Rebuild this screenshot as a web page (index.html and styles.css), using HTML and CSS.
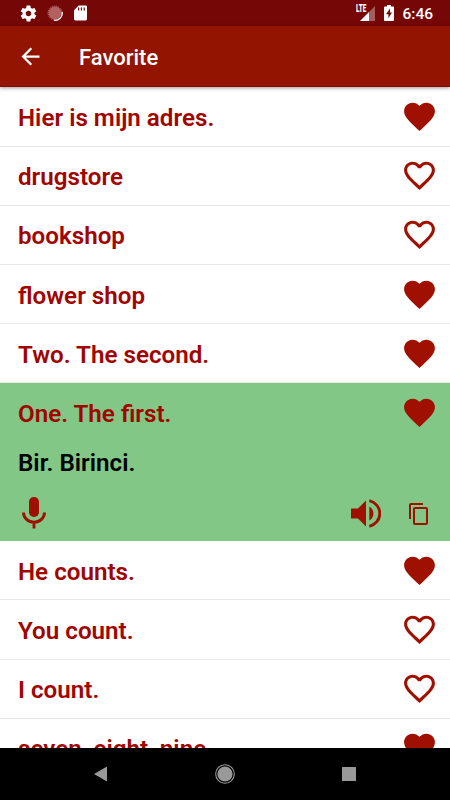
FILE: index.html
```
<!DOCTYPE html>
<html lang="en">
<head>
<meta charset="utf-8">
<title>Favorite</title>
<link rel="stylesheet" href="styles.css">
</head>
<body>
<svg class="defs" aria-hidden="true">
  <symbol id="full" viewBox="0 0 24 24"><path d="M12 21.35l-1.45-1.32C5.4 15.36 2 12.28 2 8.5 2 5.42 4.42 3 7.5 3c1.74 0 3.41.81 4.5 2.09C13.09 3.81 14.76 3 16.5 3 19.58 3 22 5.42 22 8.5c0 3.78-3.4 6.86-8.55 11.54L12 21.35z"/></symbol>
  <symbol id="line" viewBox="0 0 24 24"><path d="M16.5 3c-1.74 0-3.41.81-4.5 2.09C10.91 3.81 9.24 3 7.5 3 4.42 3 2 5.42 2 8.5c0 3.78 3.4 6.86 8.55 11.54L12 21.35l1.45-1.32C18.6 15.36 22 12.28 22 8.5 22 5.42 19.58 3 16.5 3zm-4.4 15.55l-.1.1-.1-.1C7.14 14.24 4 11.39 4 8.5 4 6.5 5.5 5 7.5 5c1.54 0 3.04.99 3.57 2.36h1.87C13.46 5.99 14.96 5 16.5 5c2 0 3.5 1.5 3.5 3.5 0 2.89-3.14 5.74-7.9 10.05z"/></symbol>
</svg>
<div class="screen">
  <header class="status">
    <svg class="gear" viewBox="0 0 24 24"><path d="M19.43 12.98c.04-.32.07-.64.07-.98s-.03-.66-.07-.98l2.11-1.65c.19-.15.24-.42.12-.64l-2-3.46c-.12-.22-.39-.3-.61-.22l-2.49 1c-.52-.4-1.08-.73-1.69-.98l-.38-2.65C14.46 2.18 14.25 2 14 2h-4c-.25 0-.46.18-.49.42l-.38 2.65c-.61.25-1.17.59-1.69.98l-2.49-1c-.23-.09-.49 0-.61.22l-2 3.46c-.13.22-.07.49.12.64l2.11 1.65c-.04.32-.07.65-.07.98s.03.66.07.98l-2.11 1.65c-.19.15-.24.42-.12.64l2 3.46c.12.22.39.3.61.22l2.49-1c.52.4 1.08.73 1.69.98l.38 2.65c.03.24.24.42.49.42h4c.25 0 .46-.18.49-.42l.38-2.65c.61-.25 1.17-.59 1.69-.98l2.49 1c.23.09.49 0 .61-.22l2-3.46c.12-.22.07-.49-.12-.64l-2.11-1.65zM12 15.500c-1.930 0-3.500-1.570-3.500-3.500s1.570-3.500 3.500-3.500 3.500 1.570 3.500 3.500-1.570 3.500-3.500 3.500z"/></svg>
    <svg class="sync" viewBox="0 0 16 16"><circle cx="8" cy="8" r="6.500" fill="#b36060"/><circle cx="8" cy="8" r="7" fill="none" stroke="#c98a8a" stroke-width="1" stroke-dasharray="1 1"/><path d="M15.200 7A7.200 7.200 0 0 1 7 15.200" fill="none" stroke="#fff" stroke-width="1.300"/></svg>
    <svg class="card" viewBox="0 0 14 16"><path d="M5 0h7.500Q14 0 14 1.500v13Q14 16 12.500 16h-11Q0 16 0 14.500V5z"/><path d="M5 2.200v3.200M8 2.200v3.200M11 2.200v3.200" stroke="#760707" stroke-width="1.300"/></svg>
    <span class="grow"></span>
    <span class="network"><span class="lte">LTE</span><svg class="signal" viewBox="0 0 15 15"><path d="M15 0v15H9V6z" opacity=".35"/><path d="M9 6v9H0z"/></svg></span>
    <svg class="battery" viewBox="0 0 10 16"><path d="M3 0h4v1.500h2q1 0 1 1V15q0 1-1 1H1q-1 0-1-1V2.500q0-1 1-1h2z"/><path d="M6 3.500L2 9.300h2.400v4L8 7.500H6z" fill="#760707"/></svg>
    <time>6:46</time>
  </header>
  <div class="appbar">
    <svg class="back" viewBox="0 0 24 24"><path d="M20 11H7.830l5.590-5.590L12 4l-8 8 8 8 1.410-1.410L7.830 13H20z"/></svg>
    <h1>Favorite</h1>
  </div>
  <main>
    <div class="row"><span>Hier is mijn adres.</span><svg class="heart"><use href="#full"/></svg></div>
    <div class="row"><span>drugstore</span><svg class="heart"><use href="#line"/></svg></div>
    <div class="row"><span>bookshop</span><svg class="heart"><use href="#line"/></svg></div>
    <div class="row"><span>flower shop</span><svg class="heart"><use href="#full"/></svg></div>
    <div class="row"><span>Two. The second.</span><svg class="heart"><use href="#full"/></svg></div>
    <section class="open">
      <div class="row"><span>One. The first.</span><svg class="heart"><use href="#full"/></svg></div>
      <p>Bir. Birinci.</p>
      <div class="tools">
        <svg class="mic" viewBox="0 0 24 32"><rect x="7" y="0" width="10" height="20" rx="4.800"/><path d="M1.500 15.500a10.500 9.700 0 0 0 21 0M12 25v6.600" fill="none" stroke="#a01000" stroke-width="2.900"/></svg>
        <span class="grow"></span>
        <svg class="volume" viewBox="0 0 30 29"><path d="M0 9.500h7l8-8v26l-8-8H0zM18.300 7.500c5.500 3 5.500 11 0 14z"/><path d="M18.300 1.700C24.500 3.200 28.800 8.300 28.800 14.500S24.500 25.800 18.300 27.300" fill="none" stroke="#a01000" stroke-width="2.900"/></svg>
        <svg class="copy" viewBox="0 0 24 24"><path d="M16 1H4c-1.100 0-2 .9-2 2v14h2V3h12V1zm3 4H8c-1.100 0-2 .9-2 2v14c0 1.100.9 2 2 2h11c1.100 0 2-.9 2-2V7c0-1.100-.9-2-2-2zm0 16H8V7h11v14z"/></svg>
      </div>
    </section>
    <div class="row"><span>He counts.</span><svg class="heart"><use href="#full"/></svg></div>
    <div class="row"><span>You count.</span><svg class="heart"><use href="#line"/></svg></div>
    <div class="row"><span>I count.</span><svg class="heart"><use href="#line"/></svg></div>
    <div class="row"><span>seven, eight, nine</span><svg class="heart"><use href="#full"/></svg></div>
  </main>
  <nav>
    <svg viewBox="0 0 20 20"><path d="M3 10L16 2.500v15z"/></svg>
    <svg viewBox="0 0 20 20"><circle cx="10" cy="10" r="7.600"/><circle cx="10" cy="10" r="9.300" fill="none" stroke="#999" stroke-width="1.100"/></svg>
    <svg viewBox="0 0 20 20"><rect x="3" y="3" width="14" height="14" rx=".5"/></svg>
  </nav>
</div>
</body>
</html>
```
FILE: styles.css
```
* { box-sizing: border-box; }
body { margin: 0; font-family: Roboto, sans-serif; }
svg { display: block; flex: none; fill: currentColor; }
.defs { display: none; }
.screen { display: flex; flex-direction: column; width: 450px; height: 800px; overflow: hidden; background: #fff; }
.grow { flex: 1; }
.status { display: flex; align-items: center; flex: none; height: 26px; padding: 0 17px 0 19px; background: #760707; color: #fff; }
.gear { width: 19px; height: 19px; }
.sync { width: 16px; height: 16px; margin-left: 9px; }
.card { width: 13px; height: 16px; margin-left: 11px; }
.network { position: relative; width: 20px; height: 16px; }
.lte { position: absolute; left: 1px; top: -1px; font-size: 10px; line-height: 10px; font-weight: 900; transform: scaleX(.63); transform-origin: left; }
.signal { width: 15px; height: 15px; margin: 1px 0 0 5px; }
.battery { width: 10px; height: 16px; margin-left: 9px; }
time { margin: 2px 0 0 8px; font-size: 15.500px; line-height: 18px; font-weight: 500; }
.appbar { position: relative; display: flex; align-items: center; flex: none; height: 61px; padding: 0 17px; background: #931400; border-bottom: 1px solid #850900; color: #fff; box-shadow: 0 1px 4px rgba(0, 0, 0, .4); }
.back { width: 27px; height: 27px; }
h1 { margin: 3px 0 0 35px; font-size: 22px; line-height: 26px; font-weight: 500; }
main { flex: 1; min-height: 0; padding-top: .600px; overflow: hidden; color: #a00500; }
.row { display: flex; align-items: center; justify-content: space-between; height: 59.170px; padding: 0 12px 0 18px; border-bottom: 1px solid #e7e7e7; font-size: 24.200px; line-height: 28px; font-weight: 650; }
.row span { padding-top: 3px; }
.heart { width: 37px; height: 37px; color: #a01000; }
.open { height: 157.900px; background: #82c785; }
.open .row { border-bottom-color: transparent; }
p { margin: 6px 0 0 18px; font-size: 24.200px; line-height: 28px; font-weight: 650; color: #000; }
.tools { display: flex; align-items: center; height: 32px; margin-top: 20px; padding: 0 19px 0 22px; color: #a01000; }
.mic { width: 24px; height: 32px; }
.volume { width: 30px; height: 29px; margin-top: 2px; }
.copy { width: 24px; height: 24px; margin: 2px 0 0 26px; }
nav { display: flex; align-items: center; justify-content: center; gap: 104px; flex: none; height: 52px; background: #000; color: #999; }
nav svg { width: 20px; height: 20px; }
```
